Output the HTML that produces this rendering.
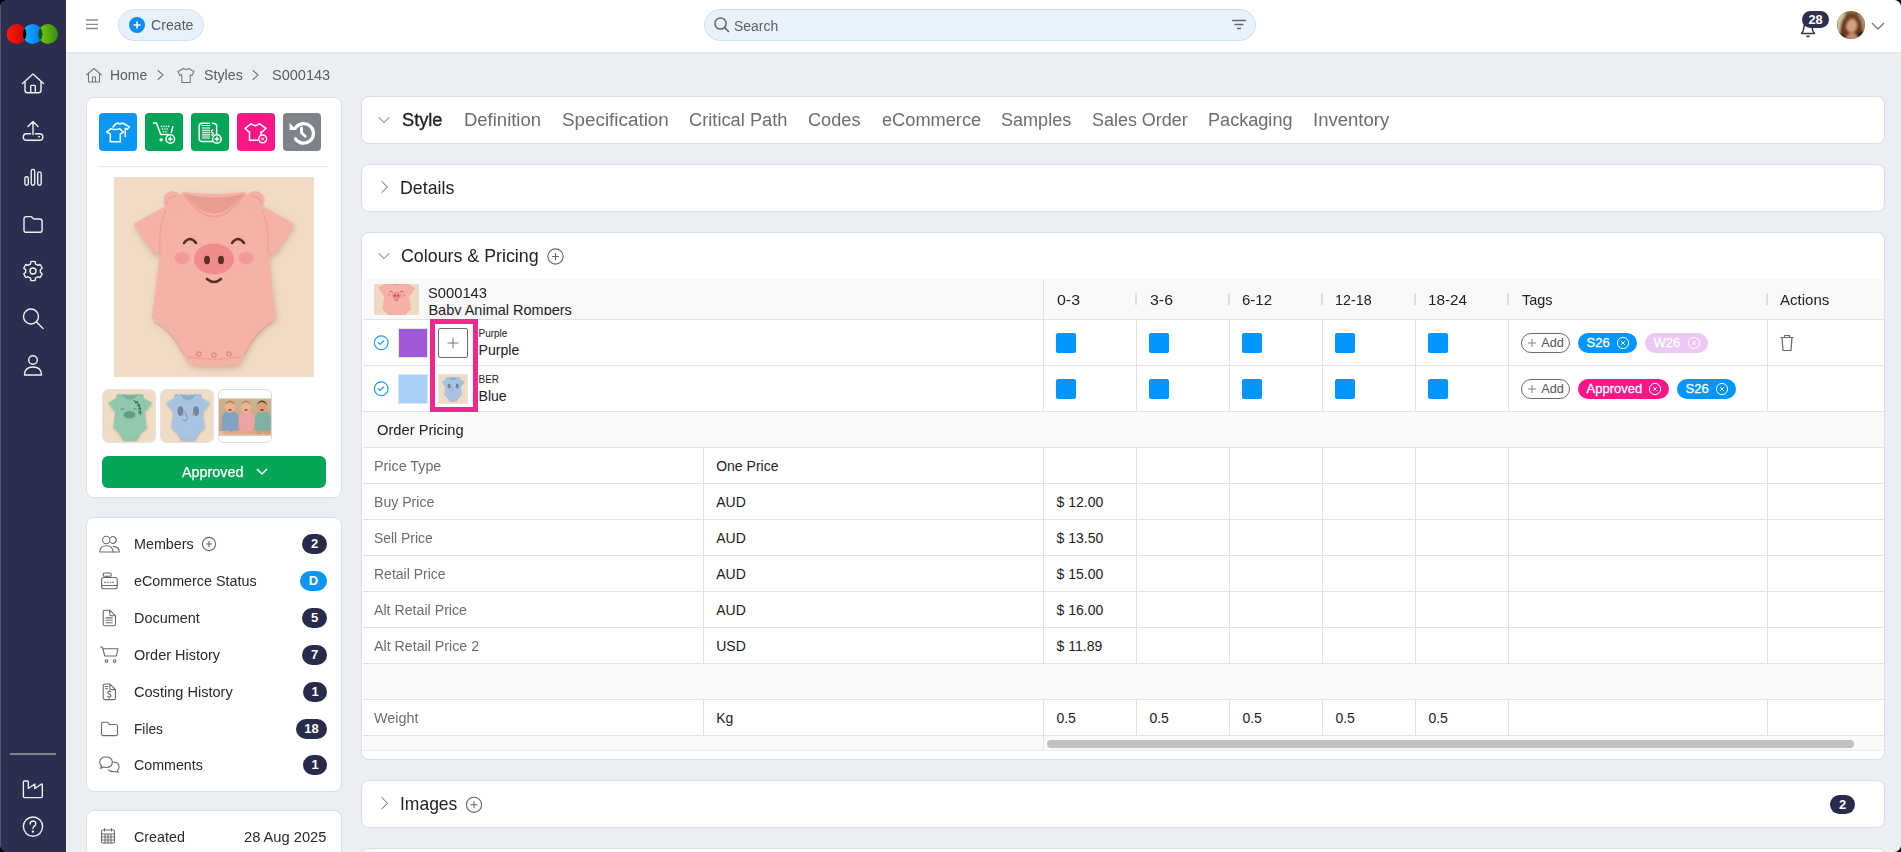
<!DOCTYPE html>
<html><head><meta charset="utf-8"><style>
html,body{margin:0;padding:0;}
body{width:1901px;height:852px;overflow:hidden;position:relative;background:#ebeef3;font-family:"Liberation Sans",sans-serif;}
.t{position:absolute;white-space:nowrap;line-height:1;}
svg{display:block}
</style></head><body>
<div style="position:absolute;left:0px;top:0px;width:66px;height:852px;background:#2b2e4e"></div>
<svg style="position:absolute;left:0;top:0" width="66" height="60">
<defs>
<linearGradient id="gr" x1="0" x2="1"><stop offset="0" stop-color="#ff1a0a"/><stop offset="1" stop-color="#c80808"/></linearGradient>
<linearGradient id="gb" x1="0" x2="1"><stop offset="0" stop-color="#10b8ff"/><stop offset="1" stop-color="#0a70f8"/></linearGradient>
<linearGradient id="gg" x1="0" x2="1"><stop offset="0" stop-color="#7acc08"/><stop offset="1" stop-color="#3a8c12"/></linearGradient>
<clipPath id="cr"><circle cx="16.5" cy="34" r="9.9"/></clipPath>
<clipPath id="cg"><circle cx="48" cy="34" r="9.9"/></clipPath>
</defs>
<circle cx="16.5" cy="34" r="9.9" fill="url(#gr)"/>
<circle cx="48" cy="34" r="9.9" fill="url(#gg)"/>
<circle cx="32.6" cy="34" r="9.9" fill="url(#gb)"/>
<circle cx="32.6" cy="34" r="9.9" fill="#000" clip-path="url(#cr)"/>
<circle cx="32.6" cy="34" r="9.9" fill="#0b5412" clip-path="url(#cg)"/>
</svg>
<svg style="position:absolute;left:0;top:60" width="66" height="340" viewBox="0 60 66 340">
<g fill="none" stroke="#f0f1f5" stroke-width="1.4" stroke-linecap="round" stroke-linejoin="round">
<path d="M22.5 83.5 L33 74 L43.5 83.5 M25 81.5 V90.3 Q25 92.8 27.5 92.8 H38.5 Q41 92.8 41 90.3 V81.5 M30.7 92.8 V86.2 Q30.7 85.4 31.5 85.4 H34.5 Q35.3 85.4 35.3 86.2 V92.8"/>
<path d="M33 134.5 V122 M28 126.5 L33 121.5 L38 126.5 M30.6 133.7 H26.5 Q23.3 133.7 23.3 136.95 Q23.3 140.2 26.5 140.2 H39.6 Q42.8 140.2 42.8 136.95 Q42.8 133.7 39.6 133.7 H35.4 M38.7 136.7 H39.4"/>
<rect x="24.9" y="176.8" width="3.4" height="8.5" rx="1.7"/><rect x="31.2" y="169.4" width="3.5" height="15.9" rx="1.75"/><rect x="37.7" y="171.9" width="3.5" height="13.4" rx="1.75"/>
<path d="M24 219 Q24 216.6 26.4 216.6 H30.5 Q31.6 216.6 32.3 217.5 L33.2 218.4 Q33.8 219 34.7 219 H39.7 Q42.1 219 42.1 221.4 V229.9 Q42.1 232.3 39.7 232.3 H26.4 Q24 232.3 24 229.9Z"/>
<path d="M30.47 264.05 L30.84 261.65 A9.6 9.6 0 0 1 35.16 261.65 L35.53 264.05 A7.4 7.4 0 0 1 37.76 265.33 L37.76 265.33 L40.02 264.45 A9.6 9.6 0 0 1 42.18 268.19 L40.29 269.72 A7.4 7.4 0 0 1 40.29 272.28 L40.29 272.28 L42.18 273.81 A9.6 9.6 0 0 1 40.02 277.55 L37.76 276.67 A7.4 7.4 0 0 1 35.53 277.95 L35.53 277.95 L35.16 280.35 A9.6 9.6 0 0 1 30.84 280.35 L30.47 277.95 A7.4 7.4 0 0 1 28.24 276.67 L28.24 276.67 L25.98 277.55 A9.6 9.6 0 0 1 23.82 273.81 L25.71 272.28 A7.4 7.4 0 0 1 25.71 269.72 L25.71 269.72 L23.82 268.19 A9.6 9.6 0 0 1 25.98 264.45 L28.24 265.33 A7.4 7.4 0 0 1 30.47 264.05 Z"/>
<circle cx="33" cy="271" r="3"/>
<circle cx="31" cy="316.5" r="7.5"/><path d="M36.5 322 L43 328.5"/>
<circle cx="33" cy="360" r="4.3"/><path d="M24.5 375 Q24.5 367 33 367 Q41.5 367 41.5 375Z"/>
</g></svg>
<div style="position:absolute;left:10px;top:753px;width:46px;height:2px;background:#85868c"></div>
<div style="position:absolute;left:0px;top:0px;width:1px;height:852px;background:#55586a"></div>
<svg style="position:absolute;left:0;top:770" width="66" height="82">
<g fill="none" stroke="#f0f1f5" stroke-width="1.4" stroke-linecap="round" stroke-linejoin="round">
<path d="M24.5 781 H27.5 Q28.3 781 28.3 782 V788.5 L34.8 784 V788.5 L41.5 784 Q42.3 783.8 42.3 784.8 V796.5 Q42.3 797.6 41.2 797.6 H24.5 Q23.4 797.6 23.4 796.5 V782 Q23.4 781 24.5 781Z" transform="translate(0,-770)"/>
<circle cx="33" cy="56.6" r="9.6"/>
<path d="M30.2 54 Q30.2 51 33 51 Q35.8 51 35.8 53.8 Q35.8 55.5 33.8 56.5 Q33 57 33 58.5"/>
<circle cx="33" cy="61.6" r="0.5" fill="#e6e7ee"/>
</g></svg>
<div style="position:absolute;left:66px;top:0px;width:1835px;height:52px;background:#fff;box-shadow:0 1px 3px rgba(0,0,0,.06)"></div>
<svg style="position:absolute;left:84;top:14px;left:84px" width="16" height="20"><g stroke="#8a8a8a" stroke-width="1.3"><path d="M2 6H14M2 10.4H14M2 14.5H14"/></g></svg>
<div style="position:absolute;left:118px;top:9px;width:86px;height:32px;box-sizing:border-box;border:1px solid #cfe2f7;background:#e7f1fc;border-radius:16px"></div>
<svg style="position:absolute;left:129px;top:17px" width="16" height="16"><circle cx="8" cy="8" r="8" fill="#0a8df5"/><path d="M8 4.5V11.5M4.5 8H11.5" stroke="#fff" stroke-width="1.6"/></svg>
<div class="t" style="left:150.5px;top:17.98px;font-size:14.2px;color:#5a5a5a;font-weight:400;transform:scaleX(0.9972);transform-origin:0 0;">Create</div>
<div style="position:absolute;left:704px;top:9px;width:552px;height:32px;box-sizing:border-box;border:1px solid #cde0f4;background:#e8f2fc;border-radius:16px"></div>
<svg style="position:absolute;left:713px;top:16px" width="18" height="18"><circle cx="7.5" cy="7.5" r="5.6" fill="none" stroke="#666" stroke-width="1.5"/><path d="M11.6 11.6L15.5 15.5" stroke="#666" stroke-width="1.6" stroke-linecap="round"/></svg>
<div class="t" style="left:733.5px;top:18.75px;font-size:14px;color:#5e5e5e;font-weight:400;transform:scaleX(0.9964);transform-origin:0 0;">Search</div>
<svg style="position:absolute;left:1230px;top:17px" width="18" height="16"><g stroke="#666" stroke-width="1.3" stroke-linecap="round"><path d="M2.5 3.5H15.5M5 7.5H13M7.5 11.5H10.5"/></g></svg>
<svg style="position:absolute;left:1796px;top:14px" width="24" height="26"><path d="M5.6 19.6 Q7.5 17.5 8 13 L8.5 9 H15.5 L16 13 Q16.5 17.5 18.4 19.6Z" fill="none" stroke="#2c2f4e" stroke-width="1.5" stroke-linejoin="round"/><path d="M10.3 21.8 Q12 23.2 13.7 21.8" fill="none" stroke="#2c2f4e" stroke-width="1.4"/></svg>
<div style="position:absolute;left:1802px;top:11px;width:27px;height:17px;background:#2c2f4e;border-radius:8.5px"></div>
<div class="t" style="left:1815.5px;top:13.96px;font-size:12.8px;color:#fff;font-weight:700;transform:translateX(-50%)">28</div>
<svg style="position:absolute;left:1837px;top:11px" width="28" height="28"><defs><clipPath id="av"><circle cx="14" cy="14" r="14"/></clipPath>
<filter id="avb"><feGaussianBlur stdDeviation=".8"/></filter></defs>
<g clip-path="url(#av)"><rect width="28" height="28" fill="#8a6a48"/>
<g filter="url(#avb)"><rect x="0" y="0" width="8" height="28" fill="#cfc2a0"/><rect x="22" y="0" width="6" height="28" fill="#a89070"/>
<path d="M3 28 Q2 12 8 5 Q14 0 20 4 Q27 10 25 28Z" fill="#6a3a1c"/>
<ellipse cx="14.5" cy="14.5" rx="5.5" ry="7" fill="#d4a07c"/>
<path d="M8 8 Q13 3 20 7 Q16 7 13 9 Q10 11 9 16Z" fill="#7a4420"/>
<path d="M9 28 Q12 20 17 22 Q20 24 22 28Z" fill="#c48a68"/><path d="M20 22 L28 20 V28 H21Z" fill="#1c1c24"/><path d="M0 22 L8 24 V28 H0Z" fill="#2a1a12"/></g></g></svg>
<svg style="position:absolute;left:1870px;top:20px" width="16" height="12"><path d="M2 3L8 9L14 3" fill="none" stroke="#777" stroke-width="1.3"/></svg>
<svg style="position:absolute;left:84px;top:64px" width="20" height="20"><g fill="none" stroke="#747474" stroke-width="1.05" stroke-linejoin="round" stroke-linecap="round"><path d="M2.5 11L10 4.5L17.5 11M4.5 9.5V18H15.5V9.5M8.5 18V13H11.5V18"/></g></svg>
<div class="t" style="left:110.4px;top:68.15px;font-size:14px;color:#5c5c5c;font-weight:400;transform:scaleX(0.9961);transform-origin:0 0;">Home</div>
<svg style="position:absolute;left:155px;top:68px" width="12" height="14"><path d="M3 2.5L8 7L3 11.5" fill="none" stroke="#747474" stroke-width="1.05" stroke-linejoin="round" stroke-linecap="round"/></svg>
<svg style="position:absolute;left:176px;top:65px" width="20" height="20"><g fill="none" stroke="#747474" stroke-width="1.05" stroke-linejoin="round" stroke-linecap="round"><path d="M7.5 3.5 Q10 5.5 12.5 3.5 L18 6.5 L16 10.5 L14.2 9.8 V17.5 H5.8 V9.8 L4 10.5 L2 6.5Z"/></g></svg>
<div class="t" style="left:203.5px;top:67.98px;font-size:14.2px;color:#5c5c5c;font-weight:400;transform:scaleX(1.0034);transform-origin:0 0;">Styles</div>
<svg style="position:absolute;left:250px;top:68px" width="12" height="14"><path d="M3 2.5L8 7L3 11.5" fill="none" stroke="#747474" stroke-width="1.05" stroke-linejoin="round" stroke-linecap="round"/></svg>
<div class="t" style="left:272.3px;top:68.11px;font-size:14.4px;color:#5c5c5c;font-weight:400;transform:scaleX(1.0094);transform-origin:0 0;">S000143</div>
<div style="position:absolute;left:86px;top:97px;width:256px;height:401px;box-sizing:border-box;background:#fff;border:1px solid #dfdfe1;border-radius:8px"></div>
<div style="position:absolute;left:99px;top:113px;width:38px;height:38px;background:#0a96f5;border-radius:4px"></div>
<div style="position:absolute;left:145px;top:113px;width:38px;height:38px;background:#06a456;border-radius:4px"></div>
<div style="position:absolute;left:191px;top:113px;width:38px;height:38px;background:#06a456;border-radius:4px"></div>
<div style="position:absolute;left:237px;top:113px;width:38px;height:38px;background:#fe1689;border-radius:4px"></div>
<div style="position:absolute;left:283px;top:113px;width:38px;height:38px;background:#7f8288;border-radius:4px"></div>
<svg style="position:absolute;left:99px;top:113px" width="38" height="38"><g fill="none" stroke="#fff" stroke-width="1.5" stroke-linejoin="round" stroke-linecap="round">
<path d="M14 14 Q16 11 18.5 10 Q21 11.5 23.5 10 L30.5 13.8 L28.3 16.3 L26.3 15.2 V23.5"/>
<path d="M12 15.6 Q16.3 17.5 20.6 15.6 L24.5 19.2 L21.3 21 V28.8 H11.3 V21 L7.6 19.2Z" fill="#0a96f5"/></g></svg>
<svg style="position:absolute;left:145px;top:113px" width="38" height="38"><g fill="none" stroke="#fff" stroke-width="1.5" stroke-linejoin="round" stroke-linecap="round">
<path d="M8.3 9.9 H11.5 L15.7 21.5 H22.5"/><path d="M27.8 13.8 L26.3 19.5"/>
<g fill="#fff" stroke="none"><circle cx="16.5" cy="13.4" r=".8"/><circle cx="18.9" cy="13.4" r=".8"/><circle cx="21.3" cy="13.4" r=".8"/><circle cx="23.7" cy="13.4" r=".8"/>
<circle cx="17.5" cy="16" r=".8"/><circle cx="19.9" cy="16" r=".8"/><circle cx="22.3" cy="16" r=".8"/><circle cx="18.6" cy="18.7" r=".8"/><circle cx="21" cy="18.7" r=".8"/>
<circle cx="16.1" cy="26.7" r="1.7"/></g>
<circle cx="25.3" cy="26" r="4.3" fill="#06a456"/><path d="M25.3 24.2V27.8M23.5 26H27.1"/></g></svg>
<svg style="position:absolute;left:191px;top:113px" width="38" height="38"><g fill="none" stroke="#fff" stroke-width="1.5" stroke-linejoin="round" stroke-linecap="round">
<path d="M18.5 10.2 H11 Q8.2 10.2 8.2 13 V25.5 Q8.2 28.5 11 28.5 H21.5"/><path d="M21.5 10.2 Q25.7 10.2 25.7 13 V21"/>
<path d="M11.3 12.5H18.7M11.3 15H18.7M11.3 17.3H18.7M11.3 19.3H18.7M11.3 21.3H18.7M11.3 23H18.7M11.3 25H18.7" stroke-width="1.1"/>
<path d="M21.8 17.3 Q20.3 17 20.3 18.4 Q20.3 19.5 21.3 19.6 Q22.3 19.8 22.3 20.8 Q22.3 22 20.6 21.8M21.3 16.5V17.2M21.3 21.8V22.6" stroke-width="1.1"/>
<circle cx="25.9" cy="26" r="4.3" fill="#06a456"/><path d="M25.9 24.2V27.8M24.1 26H27.7"/></g></svg>
<svg style="position:absolute;left:237px;top:113px" width="38" height="38"><g fill="none" stroke="#fff" stroke-width="1.5" stroke-linejoin="round" stroke-linecap="round">
<path d="M24 21.5 V18.7 L25.2 19 L29 15.3 L22.3 10.7 Q18.3 14.5 14.3 10.7 L8.1 15.3 L11.8 19 L12.5 18.7 V27.2 H21"/>
<circle cx="25.7" cy="25.9" r="3.9" fill="#fe1689"/><path d="M24.5 24.7L26.9 27.1M26.9 24.7L24.5 27.1" stroke-width="1"/></g></svg>
<svg style="position:absolute;left:283px;top:113px" width="38" height="38"><g fill="none" stroke="#fff" stroke-width="3.2" stroke-linecap="round" stroke-linejoin="round">
<path d="M12.8 14.5 A9.8 9.8 0 1 1 12.5 25.8"/><path d="M18.5 15V19.8L22.2 23.3" stroke-width="2.9"/></g>
<path d="M6.6 10 V17 H13.6Z" fill="#fff"/></svg>
<div style="position:absolute;left:99px;top:166px;width:229px;height:1px;background:#e6e6e8"></div>
<div style="position:absolute;left:114px;top:177px;width:200px;height:200px"><svg width="200" height="200" viewBox="0 0 200 200" preserveAspectRatio="none" style="display:block">
<defs><filter id="bl1" x="-20%" y="-20%" width="140%" height="140%"><feGaussianBlur stdDeviation="3"/></filter></defs>
<rect width="200" height="200" fill="#f0dcc6"/>
<path d="M70 15 Q100 19 130 15 L150 30 L180.6 47 L160 77.5 L154.2 75 Q157 105 162 141 Q143 150 131 175 L125 187 Q100 191 75 187 L69 175 Q57 150 38 141 Q43 105 45.8 75 L40 77.5 L19.4 47 L50 30Z" fill="rgba(120,70,40,.28)" transform="translate(1,3)" filter="url(#bl1)"/>
<path d="M70 15 Q100 19 130 15 L150 30 L180.6 47 L160 77.5 L154.2 75 Q157 105 162 141 Q143 150 131 175 L125 187 Q100 191 75 187 L69 175 Q57 150 38 141 Q43 105 45.8 75 L40 77.5 L19.4 47 L50 30Z" fill="#f6b2a6"/><circle cx="58.7" cy="23.5" r="9.5" fill="#f6b2a6"/><circle cx="141.3" cy="23.5" r="9.5" fill="#f6b2a6"/><path d="M52 28 Q54 19 62 19M148 28 Q146 19 138 19" fill="none" stroke="#e99c90" stroke-width="2" opacity=".6"/>
<path d="M71 17 Q100 56 129 17 Q100 24 71 17Z" fill="#e99c90"/>
<path d="M70 17 Q100 62 130 17" fill="none" stroke="#e99c90" stroke-width="1.6" opacity=".8"/>
<path d="M46 75 Q44 50 52 33 M154 75 Q156 50 148 33 M40 145 Q56 152 70 178 M160 145 Q144 152 130 178 M73 180 Q100 184 127 180" fill="none" stroke="#e99c90" stroke-width="1.4" opacity=".7"/><path d="M70 66 Q76 58 82 66M118 66 Q124 58 130 66" fill="none" stroke="#5a3026" stroke-width="2.6" stroke-linecap="round"/>
<ellipse cx="100" cy="82" rx="20" ry="15.5" fill="#f28c8c"/><ellipse cx="93" cy="83" rx="3" ry="4.3" fill="#5a3026"/><ellipse cx="107" cy="83" rx="3" ry="4.3" fill="#5a3026"/>
<ellipse cx="68" cy="81" rx="7.5" ry="6.2" fill="#f4999b"/><ellipse cx="132" cy="81" rx="7.5" ry="6.2" fill="#f4999b"/>
<path d="M93 102 Q100 108 107 102" fill="none" stroke="#5a3026" stroke-width="2.6" stroke-linecap="round"/>
<circle cx="85" cy="177" r="2.2" fill="none" stroke="#d98a80" stroke-width="1.2"/><circle cx="100" cy="178" r="2.2" fill="none" stroke="#d98a80" stroke-width="1.2"/><circle cx="115" cy="177" r="2.2" fill="none" stroke="#d98a80" stroke-width="1.2"/></svg></div>
<div style="position:absolute;left:102px;top:389px;width:54px;height:54px;border-radius:6px;overflow:hidden;box-sizing:border-box;border:1px solid #e4e4e4"><svg width="54" height="54" viewBox="0 0 200 200" preserveAspectRatio="none" style="display:block">
<defs><filter id="bl2" x="-20%" y="-20%" width="140%" height="140%"><feGaussianBlur stdDeviation="3"/></filter></defs>
<rect width="200" height="200" fill="#eedcc4"/>
<path d="M70 15 Q100 19 130 15 L150 30 L180.6 47 L160 77.5 L154.2 75 Q157 105 162 141 Q143 150 131 175 L125 187 Q100 191 75 187 L69 175 Q57 150 38 141 Q43 105 45.8 75 L40 77.5 L19.4 47 L50 30Z" fill="rgba(120,70,40,.28)" transform="translate(1,3)" filter="url(#bl2)"/>
<path d="M70 15 Q100 19 130 15 L150 30 L180.6 47 L160 77.5 L154.2 75 Q157 105 162 141 Q143 150 131 175 L125 187 Q100 191 75 187 L69 175 Q57 150 38 141 Q43 105 45.8 75 L40 77.5 L19.4 47 L50 30Z" fill="#92c9ae"/><circle cx="58.7" cy="23.5" r="9.5" fill="#92c9ae"/><circle cx="141.3" cy="23.5" r="9.5" fill="#92c9ae"/><path d="M52 28 Q54 19 62 19M148 28 Q146 19 138 19" fill="none" stroke="#78b096" stroke-width="2" opacity=".6"/>
<path d="M71 17 Q100 56 129 17 Q100 24 71 17Z" fill="#78b096"/>
<path d="M70 17 Q100 62 130 17" fill="none" stroke="#78b096" stroke-width="1.6" opacity=".8"/>
<path d="M46 75 Q44 50 52 33 M154 75 Q156 50 148 33 M40 145 Q56 152 70 178 M160 145 Q144 152 130 178 M73 180 Q100 184 127 180" fill="none" stroke="#78b096" stroke-width="1.4" opacity=".7"/><ellipse cx="98" cy="92" rx="22" ry="14" fill="#5f9e84"/><path d="M66 72 Q72 66 78 72M112 72 Q118 66 124 72" fill="none" stroke="#3e7a62" stroke-width="3"/>
<path d="M115 40 Q140 45 138 90 M120 48 L128 44 M127 58 L136 55 M131 70 L140 69 M132 82 L141 83" fill="none" stroke="#3e7a62" stroke-width="5" stroke-linecap="round"/></svg></div>
<div style="position:absolute;left:160px;top:389px;width:54px;height:54px;border-radius:6px;overflow:hidden;box-sizing:border-box;border:1px solid #e4e4e4"><svg width="54" height="54" viewBox="0 0 200 200" preserveAspectRatio="none" style="display:block">
<defs><filter id="bl3" x="-20%" y="-20%" width="140%" height="140%"><feGaussianBlur stdDeviation="3"/></filter></defs>
<rect width="200" height="200" fill="#eedcc4"/>
<path d="M70 15 Q100 19 130 15 L150 30 L180.6 47 L160 77.5 L154.2 75 Q157 105 162 141 Q143 150 131 175 L125 187 Q100 191 75 187 L69 175 Q57 150 38 141 Q43 105 45.8 75 L40 77.5 L19.4 47 L50 30Z" fill="rgba(120,70,40,.28)" transform="translate(1,3)" filter="url(#bl3)"/>
<path d="M70 15 Q100 19 130 15 L150 30 L180.6 47 L160 77.5 L154.2 75 Q157 105 162 141 Q143 150 131 175 L125 187 Q100 191 75 187 L69 175 Q57 150 38 141 Q43 105 45.8 75 L40 77.5 L19.4 47 L50 30Z" fill="#a8c4e2"/><circle cx="58.7" cy="23.5" r="9.5" fill="#a8c4e2"/><circle cx="141.3" cy="23.5" r="9.5" fill="#a8c4e2"/><path d="M52 28 Q54 19 62 19M148 28 Q146 19 138 19" fill="none" stroke="#8eaacb" stroke-width="2" opacity=".6"/>
<path d="M71 17 Q100 56 129 17 Q100 24 71 17Z" fill="#8eaacb"/>
<path d="M70 17 Q100 62 130 17" fill="none" stroke="#8eaacb" stroke-width="1.6" opacity=".8"/>
<path d="M46 75 Q44 50 52 33 M154 75 Q156 50 148 33 M40 145 Q56 152 70 178 M160 145 Q144 152 130 178 M73 180 Q100 184 127 180" fill="none" stroke="#8eaacb" stroke-width="1.4" opacity=".7"/><ellipse cx="72" cy="78" rx="11" ry="18" fill="#6d85a0"/><ellipse cx="130" cy="78" rx="11" ry="18" fill="#6d85a0"/>
<circle cx="82" cy="90" r="5" fill="#e08a92"/><circle cx="120" cy="90" r="5" fill="#e08a92"/><path d="M88 78 Q100 100 96 110 Q88 118 80 112" fill="none" stroke="#6d85a0" stroke-width="3"/></svg></div>
<div style="position:absolute;left:218px;top:389px;width:54px;height:54px;border-radius:6px;overflow:hidden;box-sizing:border-box;border:1px solid #dcdcdc;background:#fff">
<svg width="54" height="54" style="display:block"><defs><linearGradient id="bbg" x1="0" y1="0" x2="0" y2="1"><stop offset="0" stop-color="#cdb496"/><stop offset="1" stop-color="#bfa080"/></linearGradient>
<filter id="bbl"><feGaussianBlur stdDeviation=".45"/></filter></defs>
<rect x="0" y="8.5" width="54" height="37" fill="url(#bbg)"/>
<g filter="url(#bbl)">
<rect x="0" y="41" width="54" height="4.5" fill="#d8c4aa"/>
<path d="M3 28 Q4 22 9 21.5 H14 Q19 22 19.5 28 L19 38 Q18 42 14 42 H7 Q3 42 3 38Z" fill="#7ea4c2"/>
<path d="M19.5 28 Q20.5 22 25 21.5 H30 Q35 22 35.5 28 L35 38 Q34 42 30 42 H24 Q20 42 20 38Z" fill="#eba3a3"/>
<path d="M36 28 Q37 22 41.5 21.5 H46.5 Q51.5 22 52 28 L51.5 38 Q50.5 42 46.5 42 H40.5 Q36.5 42 36.5 38Z" fill="#7db3a2"/>
<ellipse cx="11" cy="17" rx="5.3" ry="5.8" fill="#e9b48f"/><ellipse cx="27" cy="17" rx="5.3" ry="5.8" fill="#eab592"/><ellipse cx="43" cy="17" rx="5.3" ry="5.8" fill="#d9a07a"/>
<path d="M6 15 Q7 10.5 11 10.5 Q15 10.5 16 15 Q13 12.5 11 12.5 Q8 12.5 6 15Z" fill="#c08458"/><path d="M22 15 Q23 10.5 27 10.5 Q31 10.5 32 15 Q29 12.5 27 12.5 Q24 12.5 22 15Z" fill="#c88c5c"/><path d="M38 15 Q39 10.5 43 10.5 Q47 10.5 48 15 Q45 12 43 12 Q40 12 38 15Z" fill="#6a4028"/>
<ellipse cx="11" cy="20" rx="1.8" ry="1" fill="#a0504a"/><ellipse cx="27" cy="20" rx="1.8" ry="1" fill="#a0504a"/><ellipse cx="43" cy="20" rx="1.8" ry="1" fill="#8a4038"/>
<ellipse cx="8" cy="42.5" rx="4" ry="2" fill="#e4a884"/><ellipse cx="16" cy="42.5" rx="4" ry="2" fill="#e4a884"/><ellipse cx="24" cy="42.5" rx="4" ry="2" fill="#e4a884"/><ellipse cx="32" cy="42.5" rx="4" ry="2" fill="#e4a884"/><ellipse cx="40" cy="42.5" rx="4" ry="2" fill="#d89c78"/><ellipse cx="48" cy="42.5" rx="4" ry="2" fill="#d89c78"/>
</g></svg></div>
<div style="position:absolute;left:102px;top:456px;width:224px;height:32px;background:#06a659;border-radius:6px"></div>
<div class="t" style="left:182.3px;top:464.69px;font-size:14.3px;color:#fff;font-weight:400;transform:scaleX(1.0046);transform-origin:0 0;-webkit-text-stroke:0.25px #fff">Approved</div>
<svg style="position:absolute;left:255px;top:466px" width="14" height="12"><path d="M2 3L7 8L12 3" fill="none" stroke="#fff" stroke-width="1.5"/></svg>
<div style="position:absolute;left:86px;top:517px;width:256px;height:275px;box-sizing:border-box;background:#fff;border:1px solid #dfdfe1;border-radius:8px"></div>
<div class="t" style="left:134.3px;top:537.35px;font-size:14.35px;color:#2a2a2a;font-weight:400;transform:scaleX(0.9999);transform-origin:0 0;">Members</div>
<div style="position:absolute;left:302px;top:534.0px;width:25px;height:20px;background:#282b4a;border-radius:10px"></div>
<div class="t" style="left:314.5px;top:537.29px;font-size:13px;color:#fff;font-weight:700;transform:translateX(-50%)">2</div>
<div class="t" style="left:134.3px;top:574.35px;font-size:14.35px;color:#2a2a2a;font-weight:400;transform:scaleX(0.9982);transform-origin:0 0;">eCommerce Status</div>
<div style="position:absolute;left:300px;top:571.0px;width:27px;height:20px;background:#0a96f5;border-radius:10px"></div>
<div class="t" style="left:313.5px;top:574.29px;font-size:13px;color:#fff;font-weight:700;transform:translateX(-50%)">D</div>
<div class="t" style="left:134.3px;top:611.15px;font-size:14.35px;color:#2a2a2a;font-weight:400;transform:scaleX(1.0061);transform-origin:0 0;">Document</div>
<div style="position:absolute;left:302px;top:607.8px;width:25px;height:20px;background:#282b4a;border-radius:10px"></div>
<div class="t" style="left:314.5px;top:611.09px;font-size:13px;color:#fff;font-weight:700;transform:translateX(-50%)">5</div>
<div class="t" style="left:134.3px;top:647.95px;font-size:14.35px;color:#2a2a2a;font-weight:400;transform:scaleX(1.0092);transform-origin:0 0;">Order History</div>
<div style="position:absolute;left:302px;top:644.6px;width:25px;height:20px;background:#282b4a;border-radius:10px"></div>
<div class="t" style="left:314.5px;top:647.89px;font-size:13px;color:#fff;font-weight:700;transform:translateX(-50%)">7</div>
<div class="t" style="left:134.3px;top:684.95px;font-size:14.35px;color:#2a2a2a;font-weight:400;transform:scaleX(1.0155);transform-origin:0 0;">Costing History</div>
<div style="position:absolute;left:303px;top:681.6px;width:24px;height:20px;background:#282b4a;border-radius:10px"></div>
<div class="t" style="left:315.0px;top:684.89px;font-size:13px;color:#fff;font-weight:700;transform:translateX(-50%)">1</div>
<div class="t" style="left:133.5px;top:721.85px;font-size:14.35px;color:#2a2a2a;font-weight:400;transform:scaleX(0.9539);transform-origin:0 0;">Files</div>
<div style="position:absolute;left:296px;top:718.5px;width:31px;height:20px;background:#282b4a;border-radius:10px"></div>
<div class="t" style="left:311.5px;top:721.79px;font-size:13px;color:#fff;font-weight:700;transform:translateX(-50%)">18</div>
<div class="t" style="left:133.5px;top:757.85px;font-size:14.35px;color:#2a2a2a;font-weight:400;transform:scaleX(0.9932);transform-origin:0 0;">Comments</div>
<div style="position:absolute;left:303px;top:754.5px;width:24px;height:20px;background:#282b4a;border-radius:10px"></div>
<div class="t" style="left:315.0px;top:757.79px;font-size:13px;color:#fff;font-weight:700;transform:translateX(-50%)">1</div>
<svg style="position:absolute;left:201.4px;top:535.7px" width="16" height="16"><circle cx="8" cy="8" r="6.6" fill="none" stroke="#6a6a6a" stroke-width="1.1"/><path d="M8 5V11M5 8H11" stroke="#6a6a6a" stroke-width="1.1"/></svg>
<svg style="position:absolute;left:96px;top:530px" width="28" height="250" viewBox="96 530 28 250"><g fill="none" stroke="#6a6a6a" stroke-width="1.1" stroke-linejoin="round" stroke-linecap="round">
<circle cx="106.3" cy="540" r="3.7"/><path d="M110.6 537.6 A3.3 3.3 0 1 1 110.9 542.6"/><path d="M99.8 552 Q99.8 545.7 106.4 545.7 Q113.1 545.7 113.1 552Z"/><path d="M113.3 546.4 Q119.3 547 119.3 552 H113.3"/>
<rect x="103.2" y="573" width="8" height="3.3" rx="1"/><path d="M107 576.3V577.5"/><rect x="101.6" y="577.5" width="15.6" height="11.3" rx="2"/><path d="M101.6 585.5H117.2"/><path d="M104.5 582.2H114.5" stroke-dasharray="1 1.7"/>
<path d="M104.8 610.2 H109.8 L115.5 615.8 V624.3 Q115.5 625.8 114 625.8 H104.8 Q103.2 625.8 103.2 624.3 V611.8 Q103.2 610.2 104.8 610.2Z M109.8 610.2 V614.3 Q109.8 615.8 111.3 615.8 H115.5"/><path d="M105.8 617.9H112.3M105.8 620.3H112.3M105.8 622.8H112.3"/>
<path d="M100.6 647 H102.3 L104.8 656 H116.4 L118 648.7 H103"/><circle cx="106.5" cy="661" r="1.3"/><circle cx="114.7" cy="661" r="1.3"/>
<path d="M104.8 684 H109.8 L115.5 689.6 V698 Q115.5 699.6 114 699.6 H104.8 Q103.2 699.6 103.2 698 V685.6 Q103.2 684 104.8 684Z M109.8 684 V688 Q109.8 689.6 111.3 689.6 H115.5"/><path d="M105.3 686.5H107.6M105.3 688.7H107.6"/>
<path d="M110.8 691.8 Q110.3 691.2 109.3 691.2 Q107.7 691.2 107.7 692.5 Q107.7 693.6 109.3 694 Q111 694.4 111 695.7 Q111 697 109.3 697 Q108.2 697 107.6 696.3 M109.3 690.3V691.2M109.3 697V698"/>
<path d="M103 722.3 H107 Q108 722.3 108.6 723.2 L109.3 724.5 H116 Q117.5 724.5 117.5 726 V734 Q117.5 735.6 116 735.6 H103 Q101.5 735.6 101.5 734 V723.8 Q101.5 722.3 103 722.3Z"/>
<path d="M101.8 766.2 Q99.7 764.5 99.7 762.3 Q99.7 757 106 757 Q112.3 757 112.3 762.3 Q112.3 767.5 106 767.5 Q104.5 767.5 103.3 767.1 L100.3 768.4Z"/>
<path d="M113.3 762 Q119 762.3 119 766.9 Q119 769 117.6 770.2 L118.3 772.3 L115.6 771.5 Q114.8 771.8 114 771.8 Q110.3 771.8 108.4 769.8"/>
</g></svg>
<div style="position:absolute;left:86px;top:810px;width:256px;height:60px;box-sizing:border-box;background:#fff;border:1px solid #dfdfe1;border-radius:8px"></div>
<svg style="position:absolute;left:98px;top:826px" width="22" height="22"><g fill="none" stroke="#6a6a6a" stroke-width="1.1" stroke-linejoin="round" stroke-linecap="round"><rect x="3.5" y="4" width="13" height="13" rx="1.5"/><path d="M3.5 8H16.5M3.5 11H16.5M3.5 14H16.5M7 8V17M10 8V17M13 8V17M6.5 2.5V5M13.5 2.5V5"/></g></svg>
<div class="t" style="left:134.3px;top:830.05px;font-size:14.35px;color:#2a2a2a;font-weight:400;transform:scaleX(0.9970);transform-origin:0 0;">Created</div>
<div class="t" style="left:243.6px;top:830.05px;font-size:14.35px;color:#2a2a2a;font-weight:400;transform:scaleX(1.0223);transform-origin:0 0;">28 Aug 2025</div>
<div style="position:absolute;left:361px;top:96px;width:1524px;height:48px;box-sizing:border-box;background:#fff;border:1px solid #dfdfe1;border-radius:8px"></div>
<svg style="position:absolute;left:376px;top:113px" width="16" height="14"><path d="M3 4.5L8 9.5L13 4.5" fill="none" stroke="#5e6066" stroke-width="1.0" stroke-linecap="round" stroke-linejoin="round"/></svg>
<div class="t" style="left:401.6px;top:110.88px;font-size:18.8px;color:#222;font-weight:400;transform:scaleX(0.9690);transform-origin:0 0;-webkit-text-stroke:0.35px #222">Style</div>
<div class="t" style="left:463.9px;top:110.88px;font-size:18.8px;color:#6a6d72;font-weight:400;transform:scaleX(0.9837);transform-origin:0 0;">Definition</div>
<div class="t" style="left:561.5px;top:110.88px;font-size:18.8px;color:#6a6d72;font-weight:400;transform:scaleX(1.0029);transform-origin:0 0;">Specification</div>
<div class="t" style="left:688.8px;top:110.88px;font-size:18.8px;color:#6a6d72;font-weight:400;transform:scaleX(0.9729);transform-origin:0 0;">Critical Path</div>
<div class="t" style="left:807.9px;top:110.88px;font-size:18.8px;color:#6a6d72;font-weight:400;transform:scaleX(0.9661);transform-origin:0 0;">Codes</div>
<div class="t" style="left:881.5px;top:110.88px;font-size:18.8px;color:#6a6d72;font-weight:400;transform:scaleX(0.9689);transform-origin:0 0;">eCommerce</div>
<div class="t" style="left:1001px;top:110.88px;font-size:18.8px;color:#6a6d72;font-weight:400;transform:scaleX(0.9611);transform-origin:0 0;">Samples</div>
<div class="t" style="left:1091.5px;top:110.88px;font-size:18.8px;color:#6a6d72;font-weight:400;transform:scaleX(0.9551);transform-origin:0 0;">Sales Order</div>
<div class="t" style="left:1208px;top:110.88px;font-size:18.8px;color:#6a6d72;font-weight:400;transform:scaleX(0.9636);transform-origin:0 0;">Packaging</div>
<div class="t" style="left:1313.3px;top:110.88px;font-size:18.8px;color:#6a6d72;font-weight:400;transform:scaleX(0.9867);transform-origin:0 0;">Inventory</div>
<div style="position:absolute;left:361px;top:164px;width:1524px;height:48px;box-sizing:border-box;background:#fff;border:1px solid #dfdfe1;border-radius:8px"></div>
<svg style="position:absolute;left:377px;top:180px" width="14" height="16"><path d="M4.8 1.5L10.5 7L4.8 12.5" fill="none" stroke="#5e6066" stroke-width="1.0" stroke-linecap="round" stroke-linejoin="round"/></svg>
<div class="t" style="left:400.4px;top:179.54px;font-size:17.9px;color:#222;font-weight:400;transform:scaleX(0.9924);transform-origin:0 0;">Details</div>
<div style="position:absolute;left:361px;top:232px;width:1524px;height:528px;box-sizing:border-box;background:#fff;border:1px solid #dfdfe1;border-radius:8px"></div>
<svg style="position:absolute;left:376px;top:249px" width="16" height="14"><path d="M3 4.5L8 9.5L13 4.5" fill="none" stroke="#5e6066" stroke-width="1.0" stroke-linecap="round" stroke-linejoin="round"/></svg>
<div class="t" style="left:400.8px;top:247.69px;font-size:17.85px;color:#222;font-weight:400;transform:scaleX(0.9986);transform-origin:0 0;">Colours &amp; Pricing</div>
<svg style="position:absolute;left:546.5px;top:247.5px" width="18" height="18"><circle cx="8.5" cy="8.5" r="7.6" fill="none" stroke="#666" stroke-width="1.1"/><path d="M8.5 5V12M5 8.5H12" stroke="#666" stroke-width="1.1"/></svg>
<div style="position:absolute;left:363px;top:279px;width:1521px;height:41px;background:#f9f9fa"></div>
<div style="position:absolute;left:363px;top:319px;width:1521px;height:1px;background:#e2e2e4"></div>
<div style="position:absolute;left:374px;top:284px;width:45px;height:31px;overflow:hidden"><svg width="45" height="31" viewBox="0 0 200 200" preserveAspectRatio="xMidYMid slice" style="display:block">
<defs><filter id="bl4" x="-20%" y="-20%" width="140%" height="140%"><feGaussianBlur stdDeviation="3"/></filter></defs>
<rect width="200" height="200" fill="#efd9c4"/>
<path d="M70 15 Q100 19 130 15 L150 30 L180.6 47 L160 77.5 L154.2 75 Q157 105 162 141 Q143 150 131 175 L125 187 Q100 191 75 187 L69 175 Q57 150 38 141 Q43 105 45.8 75 L40 77.5 L19.4 47 L50 30Z" fill="rgba(120,70,40,.28)" transform="translate(1,3)" filter="url(#bl4)"/>
<path d="M70 15 Q100 19 130 15 L150 30 L180.6 47 L160 77.5 L154.2 75 Q157 105 162 141 Q143 150 131 175 L125 187 Q100 191 75 187 L69 175 Q57 150 38 141 Q43 105 45.8 75 L40 77.5 L19.4 47 L50 30Z" fill="#f6b2a6"/><circle cx="58.7" cy="23.5" r="9.5" fill="#f6b2a6"/><circle cx="141.3" cy="23.5" r="9.5" fill="#f6b2a6"/><path d="M52 28 Q54 19 62 19M148 28 Q146 19 138 19" fill="none" stroke="#e99c90" stroke-width="2" opacity=".6"/>
<path d="M71 17 Q100 56 129 17 Q100 24 71 17Z" fill="#e99c90"/>
<path d="M70 17 Q100 62 130 17" fill="none" stroke="#e99c90" stroke-width="1.6" opacity=".8"/>
<path d="M46 75 Q44 50 52 33 M154 75 Q156 50 148 33 M40 145 Q56 152 70 178 M160 145 Q144 152 130 178 M73 180 Q100 184 127 180" fill="none" stroke="#e99c90" stroke-width="1.4" opacity=".7"/><path d="M70 66 Q76 58 82 66M118 66 Q124 58 130 66" fill="none" stroke="#5a3026" stroke-width="2.6" stroke-linecap="round"/>
<ellipse cx="100" cy="82" rx="20" ry="15.5" fill="#f28c8c"/><ellipse cx="93" cy="83" rx="3" ry="4.3" fill="#5a3026"/><ellipse cx="107" cy="83" rx="3" ry="4.3" fill="#5a3026"/>
<ellipse cx="68" cy="81" rx="7.5" ry="6.2" fill="#f4999b"/><ellipse cx="132" cy="81" rx="7.5" ry="6.2" fill="#f4999b"/>
<path d="M93 102 Q100 108 107 102" fill="none" stroke="#5a3026" stroke-width="2.6" stroke-linecap="round"/>
<circle cx="85" cy="177" r="2.2" fill="none" stroke="#d98a80" stroke-width="1.2"/><circle cx="100" cy="178" r="2.2" fill="none" stroke="#d98a80" stroke-width="1.2"/><circle cx="115" cy="177" r="2.2" fill="none" stroke="#d98a80" stroke-width="1.2"/></svg></div>
<div class="t" style="left:428.4px;top:285.64px;font-size:14.6px;color:#222;font-weight:400;transform:scaleX(1.0093);transform-origin:0 0;">S000143</div>
<div style="position:absolute;left:428px;top:302px;width:300px;height:13px;overflow:hidden"><div class="t" style="left:0.4px;top:0.8px;font-size:14.5px;color:#222">Baby Animal Rompers</div></div>
<div style="position:absolute;left:1043px;top:279px;width:1px;height:41px;background:#e2e2e4"></div>
<div style="position:absolute;left:1135px;top:293px;width:2px;height:12px;background:#dedee0"></div>
<div style="position:absolute;left:1228px;top:293px;width:2px;height:12px;background:#dedee0"></div>
<div style="position:absolute;left:1321px;top:293px;width:2px;height:12px;background:#dedee0"></div>
<div style="position:absolute;left:1414px;top:293px;width:2px;height:12px;background:#dedee0"></div>
<div style="position:absolute;left:1507px;top:293px;width:2px;height:12px;background:#dedee0"></div>
<div style="position:absolute;left:1766px;top:293px;width:2px;height:12px;background:#dedee0"></div>
<div class="t" style="left:1056.6px;top:292.62px;font-size:14.5px;color:#222;font-weight:400;transform:scaleX(1.0975);transform-origin:0 0;">0-3</div>
<div class="t" style="left:1149.6px;top:292.62px;font-size:14.5px;color:#222;font-weight:400;transform:scaleX(1.0975);transform-origin:0 0;">3-6</div>
<div class="t" style="left:1242.3px;top:292.62px;font-size:14.5px;color:#222;font-weight:400;transform:scaleX(1.0337);transform-origin:0 0;">6-12</div>
<div class="t" style="left:1335.3px;top:292.62px;font-size:14.5px;color:#222;font-weight:400;transform:scaleX(0.9869);transform-origin:0 0;">12-18</div>
<div class="t" style="left:1428.2px;top:292.62px;font-size:14.5px;color:#222;font-weight:400;transform:scaleX(1.0516);transform-origin:0 0;">18-24</div>
<div class="t" style="left:1521.5px;top:292.62px;font-size:14.5px;color:#222;font-weight:400;transform:scaleX(0.9958);transform-origin:0 0;">Tags</div>
<div class="t" style="left:1780.3px;top:292.62px;font-size:14.5px;color:#222;font-weight:400;transform:scaleX(1.0368);transform-origin:0 0;">Actions</div>
<div style="position:absolute;left:363px;top:365px;width:1521px;height:1px;background:#e2e2e4"></div>
<div style="position:absolute;left:363px;top:411px;width:1521px;height:1px;background:#e2e2e4"></div>
<div style="position:absolute;left:1043px;top:320px;width:1px;height:91px;background:#e2e2e4"></div>
<div style="position:absolute;left:1136px;top:320px;width:1px;height:91px;background:#e2e2e4"></div>
<div style="position:absolute;left:1229px;top:320px;width:1px;height:91px;background:#e2e2e4"></div>
<div style="position:absolute;left:1322px;top:320px;width:1px;height:91px;background:#e2e2e4"></div>
<div style="position:absolute;left:1415px;top:320px;width:1px;height:91px;background:#e2e2e4"></div>
<div style="position:absolute;left:1508px;top:320px;width:1px;height:91px;background:#e2e2e4"></div>
<div style="position:absolute;left:1767px;top:320px;width:1px;height:91px;background:#e2e2e4"></div>
<svg style="position:absolute;left:372px;top:334px" width="18" height="18"><circle cx="9.2" cy="8.7" r="6.85" fill="none" stroke="#1e9bfc" stroke-width="1.15"/><path d="M6.4 8.7 L8.3 10.3 L11.6 7" fill="none" stroke="#1e9bfc" stroke-width="1.15" stroke-linecap="round" stroke-linejoin="round"/></svg>
<div style="position:absolute;left:398px;top:328px;width:30px;height:30px;box-sizing:border-box;border:1px solid #e4e4e4;background:#a05ad8"></div>
<div style="position:absolute;left:1056px;top:333px;width:20px;height:20px;background:#0096fd;border-radius:2px"></div>
<div style="position:absolute;left:1149px;top:333px;width:20px;height:20px;background:#0096fd;border-radius:2px"></div>
<div style="position:absolute;left:1242px;top:333px;width:20px;height:20px;background:#0096fd;border-radius:2px"></div>
<div style="position:absolute;left:1335px;top:333px;width:20px;height:20px;background:#0096fd;border-radius:2px"></div>
<div style="position:absolute;left:1428px;top:333px;width:20px;height:20px;background:#0096fd;border-radius:2px"></div>
<svg style="position:absolute;left:372px;top:380px" width="18" height="18"><circle cx="9.2" cy="8.7" r="6.85" fill="none" stroke="#1e9bfc" stroke-width="1.15"/><path d="M6.4 8.7 L8.3 10.3 L11.6 7" fill="none" stroke="#1e9bfc" stroke-width="1.15" stroke-linecap="round" stroke-linejoin="round"/></svg>
<div style="position:absolute;left:398px;top:374px;width:30px;height:30px;box-sizing:border-box;border:1px solid #e4e4e4;background:#a8d1f7"></div>
<div style="position:absolute;left:1056px;top:379px;width:20px;height:20px;background:#0096fd;border-radius:2px"></div>
<div style="position:absolute;left:1149px;top:379px;width:20px;height:20px;background:#0096fd;border-radius:2px"></div>
<div style="position:absolute;left:1242px;top:379px;width:20px;height:20px;background:#0096fd;border-radius:2px"></div>
<div style="position:absolute;left:1335px;top:379px;width:20px;height:20px;background:#0096fd;border-radius:2px"></div>
<div style="position:absolute;left:1428px;top:379px;width:20px;height:20px;background:#0096fd;border-radius:2px"></div>
<div class="t" style="left:478.5px;top:329.33px;font-size:10px;color:#222;font-weight:400;">Purple</div>
<div class="t" style="left:478.5px;top:342.76px;font-size:14.1px;color:#222;font-weight:400;">Purple</div>
<div class="t" style="left:478.5px;top:374.93px;font-size:10px;color:#222;font-weight:400;">BER</div>
<div class="t" style="left:478.5px;top:388.76px;font-size:14.1px;color:#222;font-weight:400;">Blue</div>
<div style="position:absolute;left:437.5px;top:328px;width:30px;height:30px;box-sizing:border-box;border:1px solid #6a6d72;border-radius:2px;background:#fff"></div>
<svg style="position:absolute;left:437.5px;top:328px" width="30" height="30"><path d="M15 9.5V20.5M9.5 15H20.5" stroke="#777" stroke-width="1"/></svg>
<div style="position:absolute;left:437.5px;top:374px;width:30px;height:30px;overflow:hidden;box-sizing:border-box;border:1px solid #e4e4e4"><svg width="28" height="28" viewBox="0 0 200 200" preserveAspectRatio="none" style="display:block">
<defs><filter id="bl5" x="-20%" y="-20%" width="140%" height="140%"><feGaussianBlur stdDeviation="3"/></filter></defs>
<rect width="200" height="200" fill="#eedcc4"/>
<path d="M70 15 Q100 19 130 15 L150 30 L180.6 47 L160 77.5 L154.2 75 Q157 105 162 141 Q143 150 131 175 L125 187 Q100 191 75 187 L69 175 Q57 150 38 141 Q43 105 45.8 75 L40 77.5 L19.4 47 L50 30Z" fill="rgba(120,70,40,.28)" transform="translate(1,3)" filter="url(#bl5)"/>
<path d="M70 15 Q100 19 130 15 L150 30 L180.6 47 L160 77.5 L154.2 75 Q157 105 162 141 Q143 150 131 175 L125 187 Q100 191 75 187 L69 175 Q57 150 38 141 Q43 105 45.8 75 L40 77.5 L19.4 47 L50 30Z" fill="#a8c4e2"/><circle cx="58.7" cy="23.5" r="9.5" fill="#a8c4e2"/><circle cx="141.3" cy="23.5" r="9.5" fill="#a8c4e2"/><path d="M52 28 Q54 19 62 19M148 28 Q146 19 138 19" fill="none" stroke="#8eaacb" stroke-width="2" opacity=".6"/>
<path d="M71 17 Q100 56 129 17 Q100 24 71 17Z" fill="#8eaacb"/>
<path d="M70 17 Q100 62 130 17" fill="none" stroke="#8eaacb" stroke-width="1.6" opacity=".8"/>
<path d="M46 75 Q44 50 52 33 M154 75 Q156 50 148 33 M40 145 Q56 152 70 178 M160 145 Q144 152 130 178 M73 180 Q100 184 127 180" fill="none" stroke="#8eaacb" stroke-width="1.4" opacity=".7"/><ellipse cx="72" cy="78" rx="11" ry="18" fill="#6d85a0"/><ellipse cx="130" cy="78" rx="11" ry="18" fill="#6d85a0"/>
<circle cx="82" cy="90" r="5" fill="#e08a92"/><circle cx="120" cy="90" r="5" fill="#e08a92"/><path d="M88 78 Q100 100 96 110 Q88 118 80 112" fill="none" stroke="#6d85a0" stroke-width="3"/></svg></div>
<div style="position:absolute;left:430px;top:319px;width:48px;height:93px;box-sizing:border-box;border:5px solid #f0288c"></div>
<div style="position:absolute;left:1521px;top:333px;width:49px;height:20px;box-sizing:border-box;border:1px solid #6b6b6b;border-radius:10px;background:#fff"></div>
<svg style="position:absolute;left:1527px;top:338px" width="10" height="10"><path d="M5 1V9M1 5H9" stroke="#777" stroke-width=".9"/></svg>
<div class="t" style="left:1541.3px;top:336.55px;font-size:12.7px;color:#555;font-weight:400;">Add</div>
<div style="position:absolute;left:1521px;top:379px;width:49px;height:20px;box-sizing:border-box;border:1px solid #6b6b6b;border-radius:10px;background:#fff"></div>
<svg style="position:absolute;left:1527px;top:384px" width="10" height="10"><path d="M5 1V9M1 5H9" stroke="#777" stroke-width=".9"/></svg>
<div class="t" style="left:1541.3px;top:382.55px;font-size:12.7px;color:#555;font-weight:400;">Add</div>
<div style="position:absolute;left:1578px;top:333px;width:59px;height:20px;background:#0096fd;border-radius:10px"></div>
<div class="t" style="left:1586.5px;top:336.39px;font-size:13px;color:#fff;font-weight:400;-webkit-text-stroke:0.3px #fff">S26</div>
<svg style="position:absolute;left:1616px;top:335.8px" width="14" height="14"><circle cx="7" cy="7" r="5.6" fill="none" stroke="#fff" stroke-width="1"/><path d="M5.2 5.2L8.8 8.8M8.8 5.2L5.2 8.8" stroke="#fff" stroke-width="1"/></svg>
<div style="position:absolute;left:1645px;top:333px;width:63px;height:20px;background:#ecc9f5;border-radius:10px"></div>
<div class="t" style="left:1653.5px;top:336.39px;font-size:13px;color:#fff;font-weight:400;-webkit-text-stroke:0.3px #fff">W26</div>
<svg style="position:absolute;left:1687px;top:335.8px" width="14" height="14"><circle cx="7" cy="7" r="5.6" fill="none" stroke="#fff" stroke-width="1"/><path d="M5.2 5.2L8.8 8.8M8.8 5.2L5.2 8.8" stroke="#fff" stroke-width="1"/></svg>
<div style="position:absolute;left:1578px;top:379px;width:91px;height:20px;background:#fe1688;border-radius:10px"></div>
<div class="t" style="left:1586.5px;top:382.39px;font-size:13px;color:#fff;font-weight:400;-webkit-text-stroke:0.3px #fff">Approved</div>
<svg style="position:absolute;left:1648px;top:381.8px" width="14" height="14"><circle cx="7" cy="7" r="5.6" fill="none" stroke="#fff" stroke-width="1"/><path d="M5.2 5.2L8.8 8.8M8.8 5.2L5.2 8.8" stroke="#fff" stroke-width="1"/></svg>
<div style="position:absolute;left:1677px;top:379px;width:59px;height:20px;background:#0096fd;border-radius:10px"></div>
<div class="t" style="left:1685.5px;top:382.39px;font-size:13px;color:#fff;font-weight:400;-webkit-text-stroke:0.3px #fff">S26</div>
<svg style="position:absolute;left:1715px;top:381.8px" width="14" height="14"><circle cx="7" cy="7" r="5.6" fill="none" stroke="#fff" stroke-width="1"/><path d="M5.2 5.2L8.8 8.8M8.8 5.2L5.2 8.8" stroke="#fff" stroke-width="1"/></svg>
<svg style="position:absolute;left:1778px;top:333px" width="18" height="20"><g fill="none" stroke="#64676c" stroke-width="1.2" stroke-linejoin="round"><path d="M2.5 4.5H15.5M6.5 4.5V2.5H11.5V4.5M4 4.5L5 17.5H13L14 4.5"/></g></svg>
<div style="position:absolute;left:363px;top:412px;width:1521px;height:35px;background:#f9f9fa"></div>
<div style="position:absolute;left:363px;top:447px;width:1521px;height:1px;background:#e2e2e4"></div>
<div class="t" style="left:377.4px;top:423.04px;font-size:14.6px;color:#222;font-weight:400;transform:scaleX(1.0069);transform-origin:0 0;">Order Pricing</div>
<div style="position:absolute;left:363px;top:483px;width:1521px;height:1px;background:#e2e2e4"></div>
<div class="t" style="left:374.2px;top:459.15px;font-size:14px;color:#6a6d72;font-weight:400;transform:scaleX(1.0215);transform-origin:0 0;">Price Type</div>
<div class="t" style="left:716.2px;top:459.15px;font-size:14px;color:#222;font-weight:400;">One Price</div>
<div style="position:absolute;left:363px;top:519px;width:1521px;height:1px;background:#e2e2e4"></div>
<div class="t" style="left:374.2px;top:495.15px;font-size:14px;color:#6a6d72;font-weight:400;transform:scaleX(1.0065);transform-origin:0 0;">Buy Price</div>
<div class="t" style="left:716.2px;top:495.15px;font-size:14px;color:#222;font-weight:400;">AUD</div>
<div class="t" style="left:1056.6px;top:495.15px;font-size:14px;color:#222;font-weight:400;">$ 12.00</div>
<div style="position:absolute;left:363px;top:555px;width:1521px;height:1px;background:#e2e2e4"></div>
<div class="t" style="left:374.2px;top:531.15px;font-size:14px;color:#6a6d72;font-weight:400;transform:scaleX(0.9944);transform-origin:0 0;">Sell Price</div>
<div class="t" style="left:716.2px;top:531.15px;font-size:14px;color:#222;font-weight:400;">AUD</div>
<div class="t" style="left:1056.6px;top:531.15px;font-size:14px;color:#222;font-weight:400;">$ 13.50</div>
<div style="position:absolute;left:363px;top:591px;width:1521px;height:1px;background:#e2e2e4"></div>
<div class="t" style="left:374.2px;top:567.15px;font-size:14px;color:#6a6d72;font-weight:400;transform:scaleX(1.0003);transform-origin:0 0;">Retail Price</div>
<div class="t" style="left:716.2px;top:567.15px;font-size:14px;color:#222;font-weight:400;">AUD</div>
<div class="t" style="left:1056.6px;top:567.15px;font-size:14px;color:#222;font-weight:400;">$ 15.00</div>
<div style="position:absolute;left:363px;top:627px;width:1521px;height:1px;background:#e2e2e4"></div>
<div class="t" style="left:374.2px;top:603.15px;font-size:14px;color:#6a6d72;font-weight:400;transform:scaleX(1.0130);transform-origin:0 0;">Alt Retail Price</div>
<div class="t" style="left:716.2px;top:603.15px;font-size:14px;color:#222;font-weight:400;">AUD</div>
<div class="t" style="left:1056.6px;top:603.15px;font-size:14px;color:#222;font-weight:400;">$ 16.00</div>
<div style="position:absolute;left:363px;top:663px;width:1521px;height:1px;background:#e2e2e4"></div>
<div class="t" style="left:374.2px;top:639.15px;font-size:14px;color:#6a6d72;font-weight:400;transform:scaleX(1.0156);transform-origin:0 0;">Alt Retail Price 2</div>
<div class="t" style="left:716.2px;top:639.15px;font-size:14px;color:#222;font-weight:400;">USD</div>
<div class="t" style="left:1056.6px;top:639.15px;font-size:14px;color:#222;font-weight:400;">$ 11.89</div>
<div style="position:absolute;left:363px;top:664px;width:1521px;height:35px;background:#f9f9fa"></div>
<div style="position:absolute;left:363px;top:699px;width:1521px;height:1px;background:#e2e2e4"></div>
<div class="t" style="left:374.2px;top:710.85px;font-size:14px;color:#6a6d72;font-weight:400;transform:scaleX(1.0249);transform-origin:0 0;">Weight</div>
<div class="t" style="left:716.2px;top:710.85px;font-size:14px;color:#222;font-weight:400;">Kg</div>
<div class="t" style="left:1056.4px;top:710.85px;font-size:14px;color:#222;font-weight:400;">0.5</div>
<div class="t" style="left:1149.4px;top:710.85px;font-size:14px;color:#222;font-weight:400;">0.5</div>
<div class="t" style="left:1242.4px;top:710.85px;font-size:14px;color:#222;font-weight:400;">0.5</div>
<div class="t" style="left:1335.4px;top:710.85px;font-size:14px;color:#222;font-weight:400;">0.5</div>
<div class="t" style="left:1428.4px;top:710.85px;font-size:14px;color:#222;font-weight:400;">0.5</div>
<div style="position:absolute;left:363px;top:735px;width:1521px;height:1px;background:#e2e2e4"></div>
<div style="position:absolute;left:703px;top:448px;width:1px;height:216px;background:#e2e2e4"></div>
<div style="position:absolute;left:703px;top:700px;width:1px;height:35px;background:#e2e2e4"></div>
<div style="position:absolute;left:1043px;top:448px;width:1px;height:216px;background:#e2e2e4"></div>
<div style="position:absolute;left:1043px;top:700px;width:1px;height:35px;background:#e2e2e4"></div>
<div style="position:absolute;left:1136px;top:448px;width:1px;height:216px;background:#e2e2e4"></div>
<div style="position:absolute;left:1136px;top:700px;width:1px;height:35px;background:#e2e2e4"></div>
<div style="position:absolute;left:1229px;top:448px;width:1px;height:216px;background:#e2e2e4"></div>
<div style="position:absolute;left:1229px;top:700px;width:1px;height:35px;background:#e2e2e4"></div>
<div style="position:absolute;left:1322px;top:448px;width:1px;height:216px;background:#e2e2e4"></div>
<div style="position:absolute;left:1322px;top:700px;width:1px;height:35px;background:#e2e2e4"></div>
<div style="position:absolute;left:1415px;top:448px;width:1px;height:216px;background:#e2e2e4"></div>
<div style="position:absolute;left:1415px;top:700px;width:1px;height:35px;background:#e2e2e4"></div>
<div style="position:absolute;left:1508px;top:448px;width:1px;height:216px;background:#e2e2e4"></div>
<div style="position:absolute;left:1508px;top:700px;width:1px;height:35px;background:#e2e2e4"></div>
<div style="position:absolute;left:1767px;top:448px;width:1px;height:216px;background:#e2e2e4"></div>
<div style="position:absolute;left:1767px;top:700px;width:1px;height:35px;background:#e2e2e4"></div>
<div style="position:absolute;left:363px;top:736px;width:1521px;height:14px;background:#fafafa"></div>
<div style="position:absolute;left:363px;top:750px;width:1521px;height:1px;background:#ececee"></div>
<div style="position:absolute;left:1043px;top:736px;width:1px;height:14px;background:#e2e2e4"></div>
<div style="position:absolute;left:1047px;top:740px;width:807px;height:8px;background:#c2c2c2;border-radius:4px"></div>
<div style="position:absolute;left:361px;top:780px;width:1524px;height:48px;box-sizing:border-box;background:#fff;border:1px solid #dfdfe1;border-radius:8px"></div>
<svg style="position:absolute;left:377px;top:796px" width="14" height="16"><path d="M4.8 1.5L10.5 7.2L4.8 12.9" fill="none" stroke="#5e6066" stroke-width="1.0" stroke-linecap="round" stroke-linejoin="round"/></svg>
<div class="t" style="left:400.4px;top:795.53px;font-size:17.8px;color:#222;font-weight:400;transform:scaleX(0.9834);transform-origin:0 0;">Images</div>
<svg style="position:absolute;left:465px;top:795.5px" width="18" height="18"><circle cx="9" cy="8.8" r="7.6" fill="none" stroke="#666" stroke-width="1.1"/><path d="M9 5.3V12.3M5.5 8.8H12.5" stroke="#666" stroke-width="1.1"/></svg>
<div style="position:absolute;left:1830px;top:795px;width:25px;height:19px;background:#282b4a;border-radius:10px"></div>
<div class="t" style="left:1842.5px;top:797.59px;font-size:13px;color:#fff;font-weight:700;transform:translateX(-50%)">2</div>
<div style="position:absolute;left:361px;top:848px;width:1524px;height:40px;box-sizing:border-box;background:#fff;border:1px solid #dfdfe1;border-radius:8px"></div>
<svg style="position:absolute;left:0;top:0" width="8" height="8"><path d="M0 0H6 Q1 1 0 6Z" fill="#000"/></svg>
<svg style="position:absolute;left:1893px;top:0" width="8" height="8"><path d="M8 0H2 Q7 1 8 6Z" fill="#000"/></svg>
<svg style="position:absolute;left:0;top:844px" width="8" height="8"><path d="M0 8H6 Q1 7 0 2Z" fill="#000"/></svg>
<svg style="position:absolute;left:1893px;top:844px" width="8" height="8"><path d="M8 8H2 Q7 7 8 2Z" fill="#000"/></svg>
</body></html>
